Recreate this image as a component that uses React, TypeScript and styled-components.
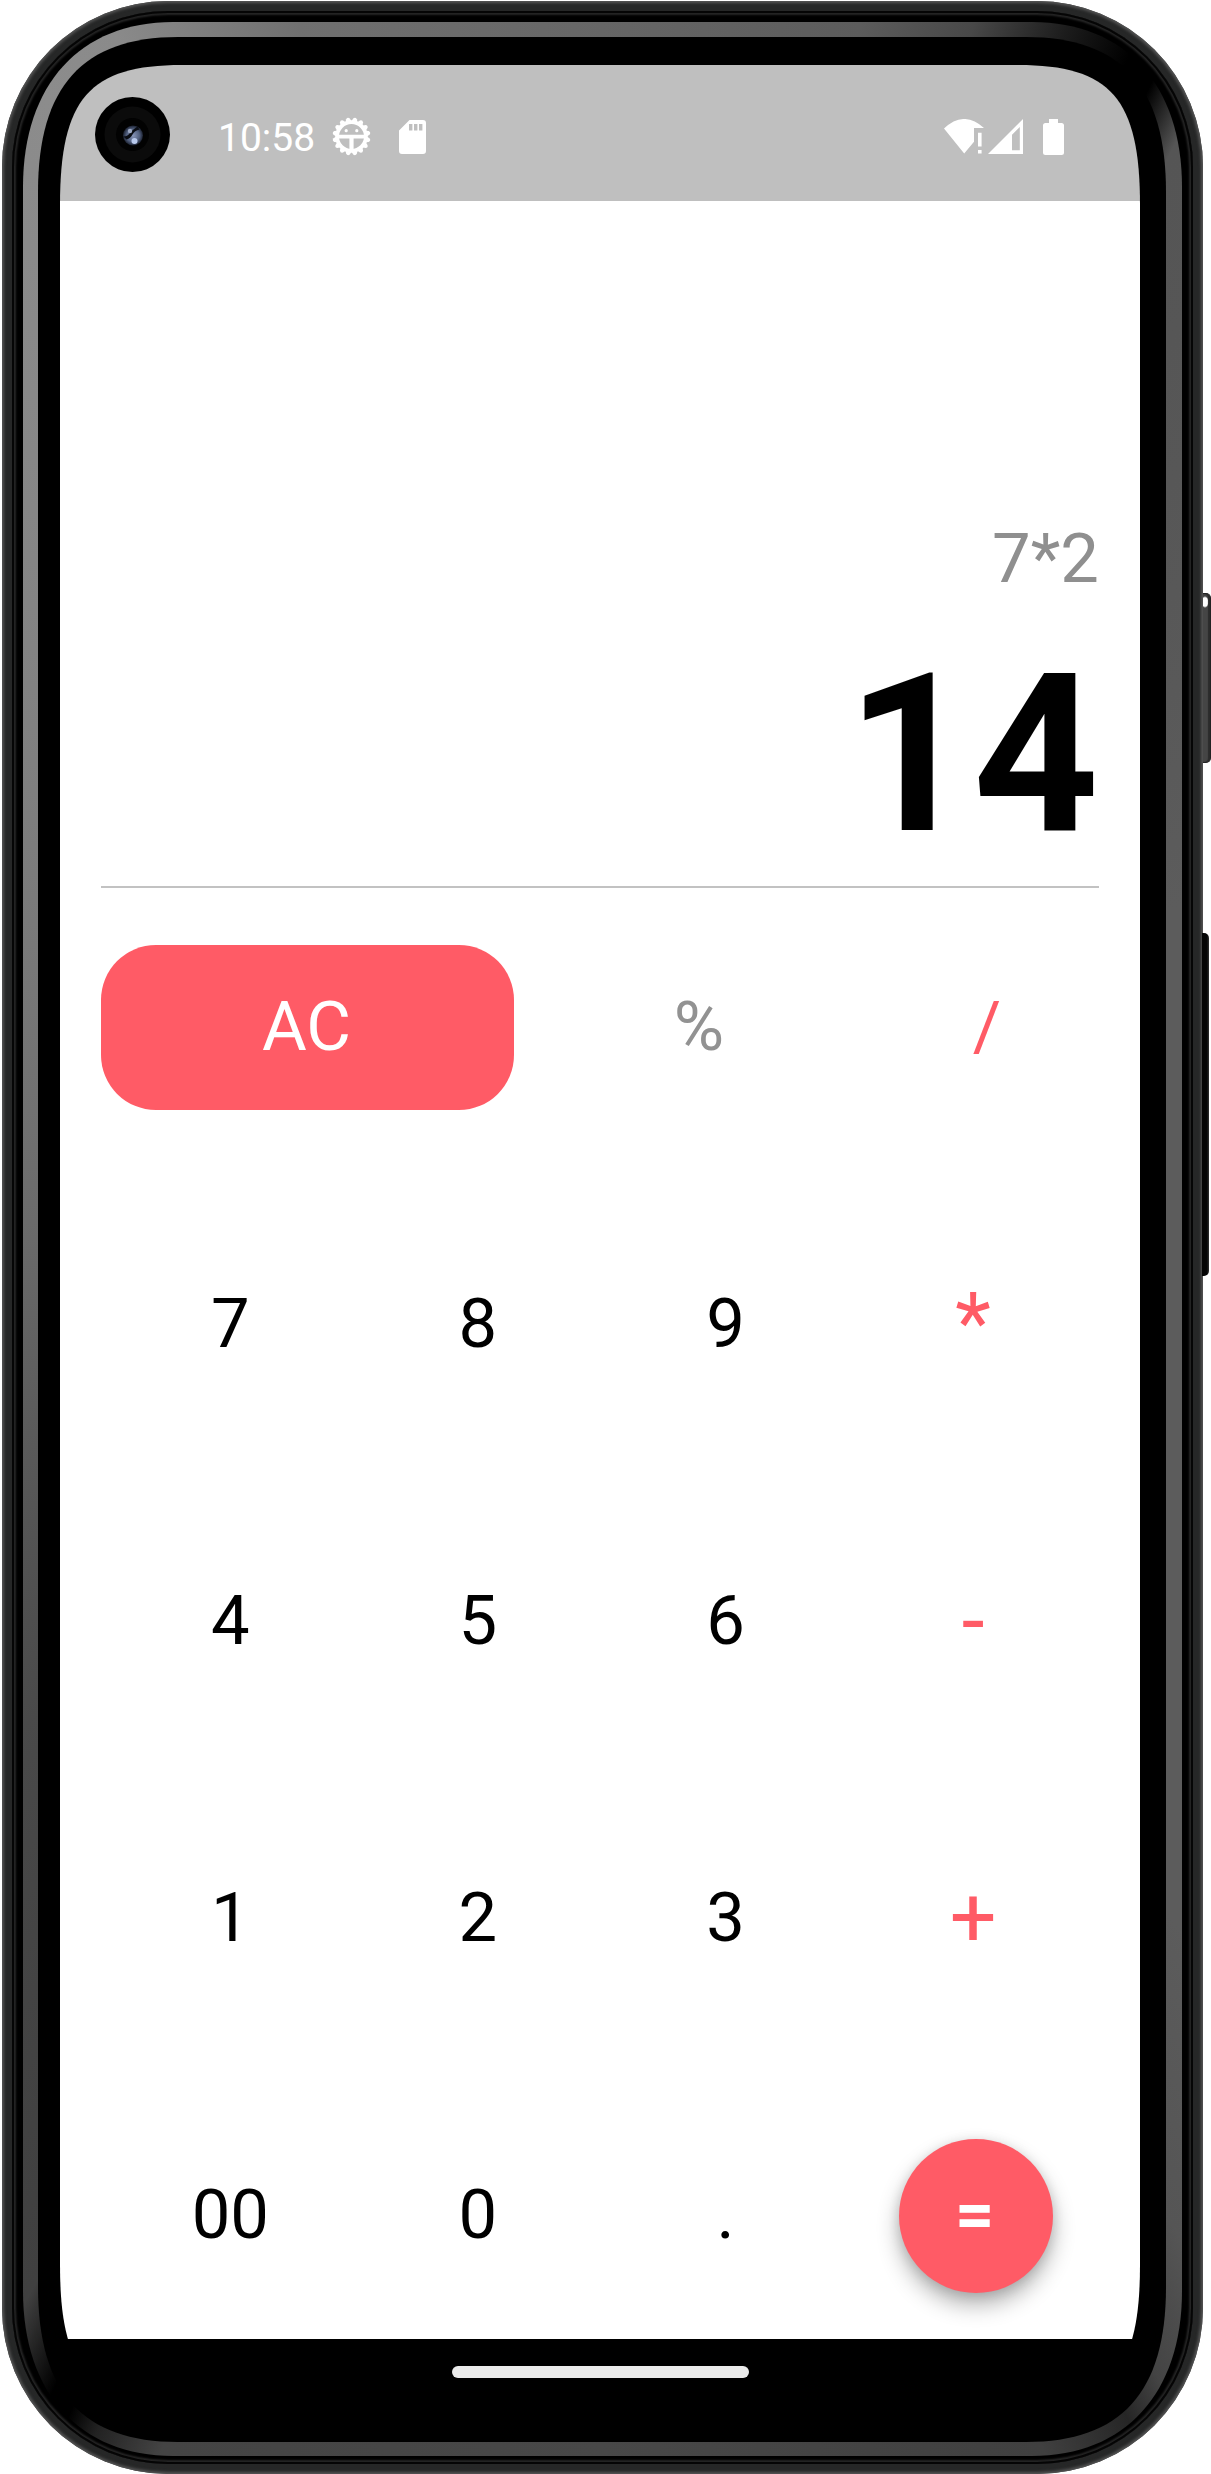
import React from "react";
import styled, { createGlobalStyle } from "styled-components";

const RED = "#ff5b66";

/** Rounded rectangle whose corners are continuous curves (k is the handle length). */
const squircle = (w: number, h: number, a: number, b: number, k: number) => {
  const x = a * (1 - k);
  const y = b * (1 - k);
  return (
    `path("M0 ${b}C0 ${y} ${x} 0 ${a} 0H${w - a}C${w - x} 0 ${w} ${y} ${w} ${b}` +
    `V${h - b}C${w} ${h - y} ${w - x} ${h} ${w - a} ${h}H${a}C${x} ${h} 0 ${h - y} 0 ${h - b}Z")`
  );
};

const GlobalStyle = createGlobalStyle`
  * { box-sizing: border-box; }
  body { margin: 0; background: #fff; }
`;

const Page = styled.div`
  position: relative;
  width: 1211px;
  height: 2474px;
  padding: 1px 8px 0 2px;
  overflow: hidden;
  background: #fff;
  font-family: Roboto, "Noto Sans", sans-serif;
`;

const Shell = styled.div`
  width: 1201px;
  height: 2473px;
  padding: 10px;
  border-radius: 166px;
  background: #262727;
  box-shadow: inset 0 0 3px 2px #555;
`;

const Groove = styled.div`
  width: 1181px;
  height: 2453px;
  padding: 11px;
  border-radius: 156px;
  background: #000;
  box-shadow: inset 0 0 0 2px #050505, inset 0 0 2px 4px #252525;
`;

const Rim = styled.div`
  width: 1159px;
  height: 2434px;
  padding: 15px 16px 14px 15px;
  clip-path: ${squircle(1159, 2434, 150, 165, 0.62)};
  background: conic-gradient(
    from 0deg,
    #666 0deg, #5c5c5c 12deg, #484848 17deg, #1c1c1c 21deg, #000 24deg,
    #000 25.4deg, #555 27.6deg, #5c5c5c 60deg, #5c5c5c 140deg, #555 150deg,
    #444 154deg, #262626 156deg, #404040 160deg, #484848 180deg, #444 200deg,
    #222 203deg, #000 204.4deg, #000 205.5deg, #404040 208.5deg, #4a4a4a 230deg,
    #6a6a6a 270deg, #808080 310deg, #8c8c8c 334deg, #8a8a8a 338deg, #707070 346deg, #666 360deg
  );
`;

const Glass = styled.div`
  width: 1128px;
  height: 2405px;
  padding: 28px 26px 37px 22px;
  clip-path: ${squircle(1128, 2405, 140, 155, 0.68)};
  background: #000;
`;

const Screen = styled.div`
  position: relative;
  display: flex;
  flex-direction: column;
  width: 1080px;
  height: 2340px;
  background: #000;
  clip-path: ${squircle(1080, 2340, 122, 140, 0.76)};
`;

const AppBody = styled.main`
  height: 2138px;
  overflow: hidden;
  background: #fff;
`;

const StatusBar = styled.header`
  display: flex;
  justify-content: space-between;
  height: 136px;
  padding: 0 76px 0 158px;
  background: #bfbfbf;
  color: #fff;
`;

const StatusGroup = styled.div`
  display: flex;
  align-items: center;
  height: 145px;
`;

const Clock = styled.time`
  width: 114px;
  font-size: 39px;
  line-height: 46px;
`;

const StatusIcon = styled.svg<{ $gap?: number }>`
  display: block;
  flex: none;
  margin-left: ${(p) => p.$gap ?? 0}px;
  margin-top: -2px;
  fill: currentColor;
`;

const Camera = styled.svg`
  position: absolute;
  left: 35px;
  top: 32px;
`;

const Display = styled.section`
  display: flex;
  flex-direction: column;
  justify-content: flex-end;
  align-items: flex-end;
  height: 687px;
  margin: 0 41px;
  border-bottom: 2px solid #c2c2c2;
`;

const Expression = styled.div`
  color: #8f8f8f;
  font-size: 68.75px;
  line-height: 80px;
`;

const Result = styled.div`
  margin: 27px 0 2px;
  color: #000;
  font-size: 220px;
  font-weight: 700;
  line-height: 258px;
`;

const Keypad = styled.section`
  display: flex;
  flex-direction: column;
  gap: 132px;
  padding-top: 57px;
`;

const TopRow = styled.div`
  display: grid;
  grid-template-columns: 413px 370px 206px;
  height: 165px;
  margin-left: 41px;
`;

const KeyRow = styled.div`
  display: grid;
  grid-template-columns: repeat(4, 247.6px);
  height: 165px;
  margin-left: 46.5px;
`;

const Key = styled.button<{ $color?: string; $large?: boolean }>`
  display: flex;
  align-items: center;
  justify-content: center;
  padding: 0;
  border: 0;
  background: none;
  color: ${(p) => p.$color ?? "#000"};
  font-family: inherit;
  font-size: ${(p) => (p.$large ? 82.5 : 68.75)}px;
  line-height: 1.172;
`;

const ClearKey = styled(Key)`
  padding-right: 2px;
  border-radius: 55px;
  background: ${RED};
`;

const EqualsKey = styled(Key)`
  align-self: center;
  width: 154px;
  height: 154px;
  margin-left: 49.5px;
  padding-right: 2px;
  border-radius: 50%;
  background: ${RED};
  box-shadow: 0 12px 22px rgba(0, 0, 0, 0.3), 0 2px 12px rgba(0, 0, 0, 0.12);
  font-weight: 700;
`;

const NavBar = styled.footer`
  display: flex;
  justify-content: center;
  flex: none;
  height: 66px;
  padding-top: 27px;
  background: #000;
`;

const HomePill = styled.div`
  width: 297px;
  height: 12px;
  border-radius: 6px;
  background: #ebebeb;
`;

const PowerButton = styled.div`
  position: absolute;
  left: 1203px;
  top: 593px;
  width: 8px;
  height: 170px;
  border: 1px solid #222;
  border-left: 0;
  border-radius: 0 5px 5px 0;
  background: radial-gradient(ellipse 4px 6px at 2px 8px, #fff 70%, transparent 100%), #454545;
  box-shadow: inset -2px 0 1px #2b2b2b;
`;

const VolumeButton = styled.div`
  position: absolute;
  left: 1202px;
  top: 933px;
  width: 7px;
  height: 343px;
  border-radius: 0 5px 5px 0;
  background: linear-gradient(90deg, #050505 70%, #333);
`;

const TEETH = Array.from({ length: 16 }, (_, i) => (i + 0.5) * 22.5);

const DebugIcon = () => (
  <StatusIcon width="39" height="39" viewBox="-19.5 -19.5 39 39">
    <circle r="14.4" fill="none" stroke="#fff" strokeWidth="3.8" />
    {TEETH.map((a) => (
      <path key={a} d="M-3-15L-1.9-18Q0-20.2 1.9-18L3-15Z" transform={`rotate(${a})`} />
    ))}
    <path d="M-14-1.8H14V2H2.1V14.5H-2.1V2H-14Z" />
    <circle cx="-5.3" cy="-5.8" r="1.6" />
    <circle cx="5.3" cy="-5.8" r="1.6" />
  </StatusIcon>
);

const SdIcon = () => (
  <StatusIcon $gap={28} width="27" height="34" viewBox="0 0 27 34">
    <path
      fillRule="evenodd"
      d="M10.5 0H24Q27 0 27 3V31Q27 34 24 34H3Q0 34 0 31V10.5ZM10 4V10.5H13.4V4ZM15 4V10.5H18.4V4ZM20 4V10.5H23.4V4Z"
    />
  </StatusIcon>
);

const WifiIcon = () => (
  <StatusIcon width="40" height="35" viewBox="0 0 40 35">
    <path d="M0 9.5Q20-9.3 40 9H30V22.8L20.2 34.5Z" />
    <path d="M34 13.7H37.6V27.5H34ZM34 31H37.6V34.5H34Z" />
  </StatusIcon>
);

const SignalIcon = () => (
  <StatusIcon $gap={4} width="35" height="35" viewBox="0 0 35 35">
    <path fillRule="evenodd" d="M35 0V35H0ZM31.8 8L24 15.8V31.3H31.8Z" />
  </StatusIcon>
);

const BatteryIcon = () => (
  <StatusIcon $gap={20} width="21" height="36" viewBox="0 0 21 36">
    <path d="M6 0H15V4H18.5Q21 4 21 6.5V33.5Q21 36 18.5 36H2.5Q0 36 0 33.5V6.5Q0 4 2.5 4H6Z" />
  </StatusIcon>
);

const CameraLens = () => (
  <Camera width="75" height="75" viewBox="-37.5 -37.5 75 75">
    <defs>
      <radialGradient id="lens" cx="0.5" cy="0.5" r="0.5">
        <stop offset="0" stopColor="#8795b8" />
        <stop offset="0.65" stopColor="#52607f" />
        <stop offset="1" stopColor="#1b2130" />
      </radialGradient>
    </defs>
    <circle r="37.5" fill="#000" />
    <circle r="28" fill="#0b0b0b" />
    <circle r="16.5" fill="#020202" />
    <circle cx="0.5" cy="1" r="10" fill="url(#lens)" />
    <path d="M-6 5Q-2 4 0 0T7-5L5-8Q-1-4-3-1T-9 2Z" fill="#0a0d14" />
    <circle cx="2" cy="6.5" r="3" fill="#b8c9ec" />
    <circle cx="-2.5" cy="-3.5" r="2.2" fill="#9da9c4" />
  </Camera>
);

const DIGIT_ROWS = [
  { digits: ["7", "8", "9"], operator: "*" },
  { digits: ["4", "5", "6"], operator: "-" },
  { digits: ["1", "2", "3"], operator: "+" },
];

export default function App() {
  return (
    <>
      <GlobalStyle />
      <Page>
        <Shell>
          <Groove>
            <Rim>
              <Glass>
                <Screen>
                  <StatusBar>
                    <StatusGroup>
                      <Clock>10:58</Clock>
                      <DebugIcon />
                      <SdIcon />
                    </StatusGroup>
                    <StatusGroup>
                      <WifiIcon />
                      <SignalIcon />
                      <BatteryIcon />
                    </StatusGroup>
                  </StatusBar>
                  <AppBody>
                    <Display>
                      <Expression>7*2</Expression>
                      <Result>14</Result>
                    </Display>
                    <Keypad>
                      <TopRow>
                        <ClearKey $color="#fff">AC</ClearKey>
                        <Key $color="#929292">%</Key>
                        <Key $color={RED}>/</Key>
                      </TopRow>
                      {DIGIT_ROWS.map((row) => (
                        <KeyRow key={row.operator}>
                          {row.digits.map((digit) => (
                            <Key key={digit}>{digit}</Key>
                          ))}
                          <Key $color={RED} $large>
                            {row.operator}
                          </Key>
                        </KeyRow>
                      ))}
                      <KeyRow>
                        <Key>00</Key>
                        <Key>0</Key>
                        <Key>.</Key>
                        <EqualsKey $color="#fff">=</EqualsKey>
                      </KeyRow>
                    </Keypad>
                  </AppBody>
                  <NavBar>
                    <HomePill />
                  </NavBar>
                  <CameraLens />
                </Screen>
              </Glass>
            </Rim>
          </Groove>
        </Shell>
        <PowerButton />
        <VolumeButton />
      </Page>
    </>
  );
}
